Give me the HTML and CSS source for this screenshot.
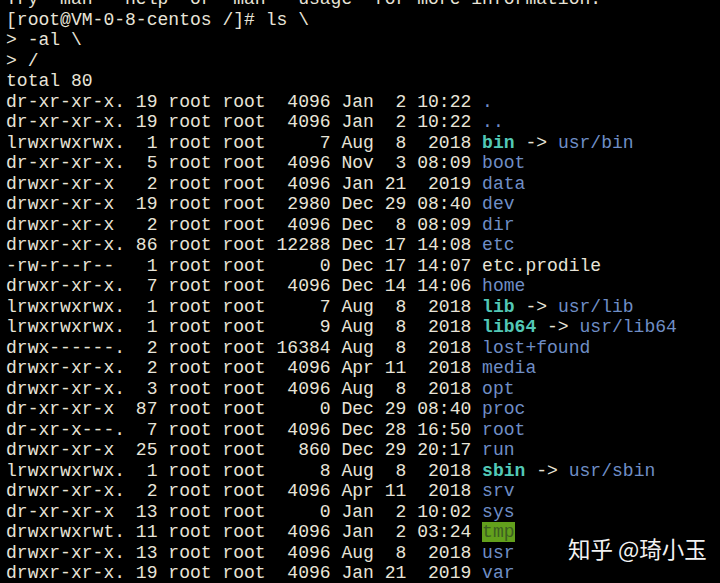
FILE: index.html
```html
<!DOCTYPE html>
<html lang="en">
<head>
<meta charset="utf-8">
<title>Terminal</title>
<link rel="stylesheet" href="styles.css">
</head>
<body>
<main class="term">
<pre class="out">Try `man' `help' or `man' `usage' for more information.
[root@VM-0-8-centos /]# ls \
&gt; -al \
&gt; /
total 80
dr-xr-xr-x. 19 root root  4096 Jan  2 10:22 <span class="dir">.</span>
dr-xr-xr-x. 19 root root  4096 Jan  2 10:22 <span class="dir">..</span>
lrwxrwxrwx.  1 root root     7 Aug  8  2018 <span class="ln">bin</span> -&gt; <span class="dir">usr/bin</span>
dr-xr-xr-x.  5 root root  4096 Nov  3 08:09 <span class="dir">boot</span>
drwxr-xr-x   2 root root  4096 Jan 21  2019 <span class="dir">data</span>
drwxr-xr-x  19 root root  2980 Dec 29 08:40 <span class="dir">dev</span>
drwxr-xr-x   2 root root  4096 Dec  8 08:09 <span class="dir">dir</span>
drwxr-xr-x. 86 root root 12288 Dec 17 14:08 <span class="dir">etc</span>
-rw-r--r--   1 root root     0 Dec 17 14:07 etc.prodile
drwxr-xr-x.  7 root root  4096 Dec 14 14:06 <span class="dir">home</span>
lrwxrwxrwx.  1 root root     7 Aug  8  2018 <span class="ln">lib</span> -&gt; <span class="dir">usr/lib</span>
lrwxrwxrwx.  1 root root     9 Aug  8  2018 <span class="ln">lib64</span> -&gt; <span class="dir">usr/lib64</span>
drwx------.  2 root root 16384 Aug  8  2018 <span class="dir">lost+found</span>
drwxr-xr-x.  2 root root  4096 Apr 11  2018 <span class="dir">media</span>
drwxr-xr-x.  3 root root  4096 Aug  8  2018 <span class="dir">opt</span>
dr-xr-xr-x  87 root root     0 Dec 29 08:40 <span class="dir">proc</span>
dr-xr-x---.  7 root root  4096 Dec 28 16:50 <span class="dir">root</span>
drwxr-xr-x  25 root root   860 Dec 29 20:17 <span class="dir">run</span>
lrwxrwxrwx.  1 root root     8 Aug  8  2018 <span class="ln">sbin</span> -&gt; <span class="dir">usr/sbin</span>
drwxr-xr-x.  2 root root  4096 Apr 11  2018 <span class="dir">srv</span>
dr-xr-xr-x  13 root root     0 Jan  2 10:02 <span class="dir">sys</span>
drwxrwxrwt. 11 root root  4096 Jan  2 03:24 <span class="sticky">tmp</span>
drwxr-xr-x. 13 root root  4096 Aug  8  2018 <span class="dir">usr</span>
drwxr-xr-x. 19 root root  4096 Jan 21  2019 <span class="dir">var</span></pre>
<div class="mark">知乎 @琦小玉</div>
</main>
</body>
</html>
```
FILE: styles.css
```css
html, body {
  margin: 0;
  padding: 0;
  background: #000;
  height: 100%;
  overflow: hidden;
}
.term {
  position: relative;
  width: 720px;
  height: 583px;
  overflow: hidden;
  background: #000;
}
.out {
  margin: -11px 0 0 0;
  padding: 0 0 0 6px;
  font-family: "Liberation Mono", "Courier New", monospace;
  font-size: 18.05px;
  line-height: 20.5px;
  color: #e8e4d8;
  white-space: pre;
}
.dir {
  color: #6f8ec6;
}
.ln {
  color: #52c8b6;
  font-weight: bold;
}
.sticky {
  background: #62a01c;
  color: #3c5e22;
}
.mark {
  position: absolute;
  left: 568px;
  top: 533px;
  font-family: "Noto Sans CJK SC", "Noto Sans", sans-serif;
  font-size: 22.5px;
  line-height: 30px;
  color: #f2f2f2;
  text-shadow: 0 0 2px rgba(0,0,0,0.6);
}
```
